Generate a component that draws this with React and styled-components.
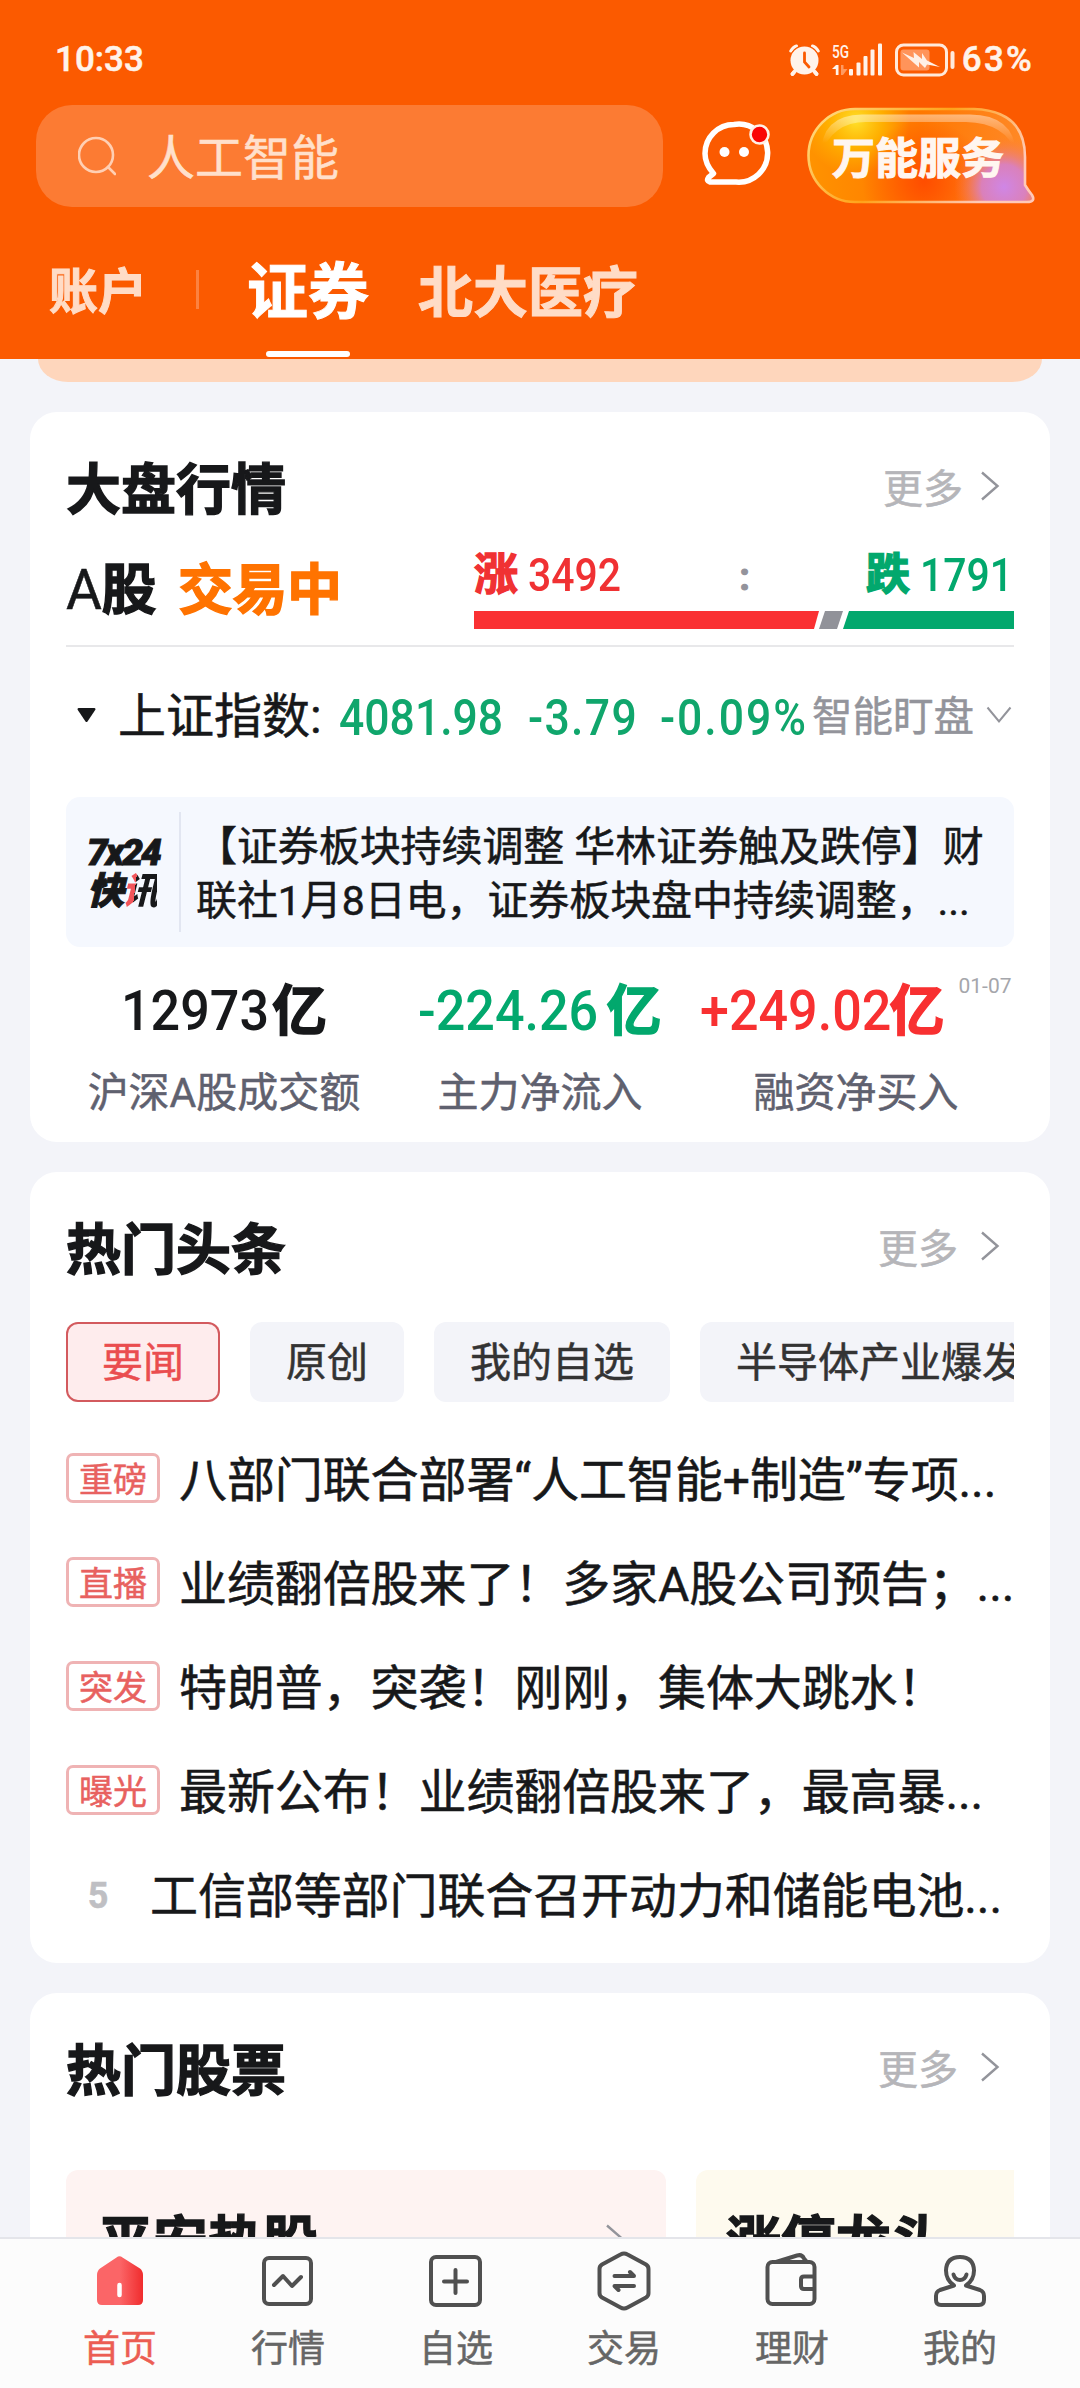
import React from 'react';
import styled, { createGlobalStyle } from 'styled-components';

const chips = ['要闻', '原创', '我的自选', '半导体产业爆发'];

const headlines = [
  { tag: '重磅', title: '八部门联合部署“人工智能+制造”专项...' },
  { tag: '直播', title: '业绩翻倍股来了！多家A股公司预告；...' },
  { tag: '突发', title: '特朗普，突袭！刚刚，集体大跳水！' },
  { tag: '曝光', title: '最新公布！业绩翻倍股来了，最高暴...' },
  { rank: 5, title: '工信部等部门联合召开动力和储能电池...' },
];

const stats = [
  { value: '12973', label: '沪深A股成交额', color: '#17181a', width: 151 },
  { value: '-224.26', label: '主力净流入', color: '#02a86d', width: 188 },
  {
    value: '+249.02',
    label: '融资净买入',
    color: '#f83031',
    width: 189,
    date: '01-07',
  },
];

const navs = [
  { label: '首页', icon: HomeIcon },
  { label: '行情', icon: QuoteIcon },
  { label: '自选', icon: PlusIcon },
  { label: '交易', icon: TradeIcon },
  { label: '理财', icon: WalletIcon },
  { label: '我的', icon: MineIcon },
];

const App = () => {
  return (
    <Screen>
      <GlobalStyle />
      <Header>
        <StatusBar>
          <span>10:33</span>
          <StatusIcons>
            <AlarmIcon />
            <SignalIcon />
            <BatteryIcon />
            <span>63%</span>
          </StatusIcons>
        </StatusBar>
        <SearchRow>
          <SearchBox>
            <svg width="38" height="40" viewBox="0 0 38 40">
              <g fill="none" stroke="#ffcfb3" strokeWidth="2.6">
                <circle cx="18" cy="19" r="17" />
                <path d="M30 31l7 7" strokeLinecap="round" />
              </g>
            </svg>
            <span>人工智能</span>
          </SearchBox>
          <ChatIcon />
          <ServiceButton>
            <ServiceBubble />
            <span>万能服务</span>
          </ServiceButton>
        </SearchRow>
        <Tabs>
          <Tab $size={49}>账户</Tab>
          <TabDivider />
          <Tab $size={61} $active>
            证券
          </Tab>
          <Tab $size={55}>北大医疗</Tab>
        </Tabs>
      </Header>

      <Content>
        <BannerEdge />

        <Card $height={730}>
          <CardHead title="大盘行情" />
          <MarketRow>
            <MarketName>
              A<b>股</b>
              <em>交易中</em>
            </MarketName>
            <UpDown>
              <Counts>
                <Count $color="#f03133">
                  <b>涨</b>
                  <Digits $width={91}>3492</Digits>
                </Count>
                <Colon>:</Colon>
                <Count $color="#02a86d">
                  <b>跌</b>
                  <Digits $width={91}>1791</Digits>
                </Count>
              </Counts>
              <RatioBar>
                <RatioPart $color="#fa3133" $width={345} $clip="0 0, 100% 0, calc(100% - 5px) 100%, 0 100%" />
                <RatioPart $color="#919299" $width={24} $clip="6px 0, 100% 0, calc(100% - 6px) 100%, 0 100%" />
                <RatioPart $color="#02a86d" $width={171} $clip="6px 0, 100% 0, 100% 100%, 0 100%" />
              </RatioBar>
            </UpDown>
          </MarketRow>
          <IndexRow>
            <svg width="19" height="15" viewBox="0 0 19 15">
              <path
                d="M1.5 0h16q1.6.6.7 2L10.5 13.5q-1 1.2-2 0L.8 2Q0 .6 1.5 0z"
                fill="#17181a"
              />
            </svg>
            <IndexName>上证指数:</IndexName>
            <IndexNum $width={189}>4081.98</IndexNum>
            <IndexNum $width={132} $spacing={1.5}>
              -3.79
            </IndexNum>
            <IndexNum $width={150} $spacing={2.2}>
              -0.09%
            </IndexNum>
            <Watch>
              <span>智能盯盘</span>
              <svg width="26" height="18" viewBox="0 0 26 18">
                <path
                  d="M1.5 1.5L13 15.5 24.5 1.5"
                  fill="none"
                  stroke="#93949b"
                  strokeWidth="2"
                />
              </svg>
            </Watch>
          </IndexRow>
          <Flash>
            <FlashLogo>
              <div>7x24</div>
              <div>
                快<i>讯</i>
              </div>
            </FlashLogo>
            <FlashText>
              【证券板块持续调整 华林证券触及跌停】财
              <br />
              联社1月8日电，证券板块盘中持续调整，...
            </FlashText>
          </Flash>
          <Stats>
            {stats.map((s) => (
              <Stat key={s.label}>
                <StatValue $color={s.color}>
                  <Digits $width={s.width} $scale={0.93}>
                    {s.value}
                  </Digits>
                  <b>亿</b>
                  {s.date && <StatDate>{s.date}</StatDate>}
                </StatValue>
                <StatLabel>{s.label}</StatLabel>
              </Stat>
            ))}
          </Stats>
        </Card>

        <Card $height={791}>
          <CardHead title="热门头条" gap={22} />
          <Chips>
            {chips.map((c, i) => (
              <Chip key={c} $active={i === 0}>
                {c}
              </Chip>
            ))}
          </Chips>
          <NewsList>
            {headlines.map((h) => (
              <NewsItem key={h.title}>
                {h.tag ? <Tag>{h.tag}</Tag> : <Rank>{h.rank}</Rank>}
                <span>{h.title}</span>
              </NewsItem>
            ))}
          </NewsList>
        </Card>

        <Card $height={420}>
          <CardHead title="热门股票" gap={22} />
          <StockCards>
            <StockCard $bg="#fef3f2" $pad={32}>
              平安热股
              <Arrow />
            </StockCard>
            <StockCard $bg="#fefaee" $pad={30}>
              涨停龙头
            </StockCard>
          </StockCards>
        </Card>
      </Content>

      <NavBar>
        {navs.map(({ label, icon: Icon }, i) => (
          <NavItem key={label} $active={i === 0}>
            <Icon />
            {label}
          </NavItem>
        ))}
      </NavBar>
    </Screen>
  );
};

export default App;

const CardHead = ({ title, gap = 17 }) => (
  <Head>
    <h2>{title}</h2>
    <More $gap={gap}>
      更多
      <Arrow />
    </More>
  </Head>
);

function Arrow() {
  return (
    <svg width="20" height="30" viewBox="0 0 20 30">
      <path
        d="M2 1.5L17.5 15 2 28.5"
        fill="none"
        stroke="#93949b"
        strokeWidth="2.4"
      />
    </svg>
  );
}

function AlarmIcon() {
  return (
    <svg width="31" height="32" viewBox="0 0 31 32">
      <g fill="none" stroke="#fff3ea" strokeLinecap="round">
        <path d="M1.8 7Q4 3 7.500 2M29.200 7Q27 3 23.500 2" strokeWidth="3" />
        <path d="M6 27l-2.500 3M25 27l2.500 3" strokeWidth="3.600" />
      </g>
      <circle cx="15.500" cy="16.500" r="15.200" fill="#fb5a00" />
      <path d="M6 27l-2.500 3M25 27l2.500 3" stroke="#fff3ea" strokeWidth="3.600" strokeLinecap="round" />
      <circle cx="15.500" cy="16.500" r="14" fill="#fff3ea" />
      <path
        d="M15.500 9v9l4.500 5"
        fill="none"
        stroke="#fb5a00"
        strokeWidth="2.800"
        strokeLinecap="round"
      />
    </svg>
  );
}

function SignalIcon() {
  return (
    <svg width="51" height="33" viewBox="0 0 51 33" overflow="visible">
      <text
        x="0"
        y="14.500"
        fontSize="19"
        fontWeight="500"
        fill="#fff3ea"
        textLength="17"
        lengthAdjust="spacingAndGlyphs"
      >
        5G
      </text>
      <path d="M0 26l4-4h2.500v10H3.800v-6z" fill="#fff3ea" />
      <path d="M9 22h2.500v4h4L11 32H9z" fill="#ff9a61" />
      <g fill="#fff3ea">
        <rect x="17" y="26" width="4" height="6.500" rx="1" />
        <rect x="24.500" y="19.500" width="4" height="13" rx="1" />
        <rect x="31.500" y="13" width="4" height="19.500" rx="1" />
        <rect x="38.500" y="6.500" width="4" height="26" rx="1" />
        <rect x="46" y="0.500" width="4" height="32" rx="1" />
      </g>
    </svg>
  );
}

function BatteryIcon() {
  return (
    <svg width="60" height="34" viewBox="0 0 60 34">
      <rect
        x="1.500"
        y="2"
        width="50"
        height="30"
        rx="7"
        fill="none"
        stroke="#ffe9db"
        strokeWidth="3"
      />
      <rect x="5.500" y="6.500" width="29" height="21" rx="3" fill="#ff945a" />
      <path
        d="M7 9.500l12 5.500-.5-6 8.500 7v-6l5 7.500 13 6.500-13-2.500-2 3.500-6-6v5.500z"
        fill="#fff0e6"
      />
      <path d="M57.500 10v14" stroke="#ffe9db" strokeWidth="4" strokeLinecap="round" />
    </svg>
  );
}

function ChatIcon() {
  return (
    <svg width="70" height="66" viewBox="0 0 70 66">
      <path
        d="M32 4.500a29 29 0 1 1 2 57.500H8q-4-1-1.500-4.500l5-4Q3 44 3 33.500A29 29 0 0 1 32 4.500z"
        fill="none"
        stroke="#fff"
        strokeWidth="5.500"
        strokeLinejoin="round"
      />
      <circle cx="22.500" cy="32" r="5" fill="#fff" />
      <circle cx="42" cy="32" r="5" fill="#fff" />
      <circle cx="57.500" cy="14.500" r="9" fill="#fa0505" stroke="#fff0e6" strokeWidth="2.600" />
    </svg>
  );
}

function ServiceBubble() {
  const bubble =
    'M49 2H168Q219 4 219 50V78Q222 83 226 88Q230 95 221 95H49A46.500 46.500 0 0 1 49 2z';
  return (
    <svg width="230" height="98" viewBox="0 0 230 98">
      <defs>
        <linearGradient id="base" x1="0" y1="0" x2="1" y2="0">
          <stop offset="0" stopColor="#ff9300" />
          <stop offset="0.500" stopColor="#ff7800" />
          <stop offset="1" stopColor="#ff8a2a" />
        </linearGradient>
        <radialGradient id="sun" gradientUnits="userSpaceOnUse" cx="50" cy="14" r="54">
          <stop offset="0" stopColor="#ffe02a" />
          <stop offset="0.500" stopColor="#ffba00" stopOpacity="0.800" />
          <stop offset="1" stopColor="#ffb400" stopOpacity="0" />
        </radialGradient>
        <radialGradient id="red" gradientUnits="userSpaceOnUse" cx="118" cy="74" r="62">
          <stop offset="0" stopColor="#ff4d00" />
          <stop offset="1" stopColor="#ff4d00" stopOpacity="0" />
        </radialGradient>
        <radialGradient id="violet" gradientUnits="userSpaceOnUse" cx="198" cy="80" r="50">
          <stop offset="0" stopColor="#cf86e6" />
          <stop offset="0.450" stopColor="#d680cc" stopOpacity="0.900" />
          <stop offset="1" stopColor="#ff7a4a" stopOpacity="0" />
        </radialGradient>
        <linearGradient id="edge" x1="0" y1="0" x2="1" y2="0.400">
          <stop offset="0" stopColor="#ffe08a" />
          <stop offset="0.550" stopColor="#ffa31a" />
          <stop offset="1" stopColor="#ffc9b8" />
        </linearGradient>
        <linearGradient id="gloss" x1="0" y1="0" x2="0" y2="1">
          <stop offset="0" stopColor="#fff" stopOpacity="0.450" />
          <stop offset="0.700" stopColor="#fff" stopOpacity="0" />
        </linearGradient>
      </defs>
      <path d={bubble} fill="url(#base)" />
      <path d={bubble} fill="url(#sun)" />
      <path d={bubble} fill="url(#red)" />
      <path d={bubble} fill="url(#violet)" />
      <path
        d="M15 48Q15 8 56 7.500H164Q208 8 210 46Q200 16 160 15H60Q26 15 15 48z"
        fill="url(#gloss)"
      />
      <path d={bubble} fill="none" stroke="url(#edge)" strokeWidth="2.600" />
    </svg>
  );
}

function HomeIcon() {
  return (
    <svg width="60" height="60" viewBox="0 0 60 60">
      <defs>
        <linearGradient id="home" x1="0" x2="1">
          <stop offset="0.500" stopColor="#fb6567" />
          <stop offset="1" stopColor="#f02c2d" />
        </linearGradient>
      </defs>
      <path
        d="M26.500 6.500Q29.500 4 32.500 6.500L50 17.500Q53 20 53 24V49Q53 54 48 54H12Q7 54 7 49V24Q7 20 10 17.500z"
        fill="url(#home)"
      />
      <path d="M29.500 34v10" stroke="#fff" strokeWidth="4.500" strokeLinecap="round" />
    </svg>
  );
}

function QuoteIcon() {
  return (
    <LineIcon>
      <rect x="6" y="7" width="47" height="46" rx="5" />
      <path d="M16 34l9-9 9 10 9-9" />
    </LineIcon>
  );
}

function PlusIcon() {
  return (
    <LineIcon>
      <rect x="5" y="6" width="49" height="48" rx="5" />
      <path d="M29.500 19v23M18 30.500h23" />
    </LineIcon>
  );
}

function TradeIcon() {
  return (
    <LineIcon>
      <path d="M26.500 3.500Q30 1.500 33.500 3.500L52 13.500Q54.500 15 54.500 18V42Q54.500 45 52 46.500L33.500 56.500Q30 58.500 26.500 56.500L8 46.500Q5.500 45 5.500 42V18Q5.500 15 8 13.500z" />
      <path d="M20.500 25H40l-4-4M40 35H20.500l4 4" />
    </LineIcon>
  );
}

function WalletIcon() {
  return (
    <LineIcon>
      <rect x="5.500" y="11" width="47" height="42" rx="5" />
      <path d="M52 25.500H42q-3 0-3 3V35q0 3 3 3h10M14 11L35 4.500q5-1.500 7 3l2.500 3" />
    </LineIcon>
  );
}

function MineIcon() {
  return (
    <LineIcon>
      <path d="M24 34.500Q16 29 16 19.500Q16.500 6 30 6T44 19.500Q44 29 36 34.500L50 39Q54 40.500 54 45V49Q54 54 49 54H11Q6 54 6 49V45Q6 40.500 10 39z" />
      <path d="M23.500 23.500Q25 29 30 29t6.500-5.500" />
    </LineIcon>
  );
}

const GlobalStyle = createGlobalStyle`
  * {
    box-sizing: border-box;
    margin: 0;
    padding: 0;
  }
  body {
    background: #f3f4f9;
    font-family: Roboto, 'Noto Sans CJK SC', sans-serif;
    color: #17181a;
    -webkit-text-stroke: 0.5px;
  }
  b,
  em,
  h2 {
    font-weight: 700;
    -webkit-text-stroke: 1.4px;
  }
  svg {
    display: block;
    flex-shrink: 0;
  }
`;

const Screen = styled.div`
  display: flex;
  flex-direction: column;
  width: 1080px;
  height: 2388px;
  overflow: hidden;
`;

const Header = styled.header`
  flex-shrink: 0;
  height: 359px;
  background: #fb5a00;
  color: #fff;
`;

const StatusBar = styled.div`
  display: flex;
  justify-content: space-between;
  align-items: center;
  height: 105px;
  padding: 14px 46px 0 55px;
  font-size: 35px;
  font-weight: 500;
  line-height: 40px;
  color: #fff3ea;
`;

const StatusIcons = styled.div`
  display: flex;
  align-items: center;
  gap: 12px;
  span {
    margin-left: -5px;
    letter-spacing: 2.2px;
  }
`;

const SearchRow = styled.div`
  display: flex;
  height: 102px;
  padding-left: 36px;
  > svg {
    margin: 15px 0 0 39px;
  }
`;

const SearchBox = styled.div`
  display: flex;
  align-items: center;
  width: 627px;
  height: 102px;
  padding-left: 42px;
  border-radius: 36px;
  background: #fc7b33;
  font-size: 48px;
  line-height: 60px;
  color: #ffe0cc;
  svg {
    margin-right: 31px;
  }
  span {
    padding-top: 5px;
  }
`;

const ServiceButton = styled.div`
  display: grid;
  margin: 2px 0 0 34px;
  > * {
    grid-area: 1 / 1;
  }
  span {
    position: relative;
    padding-left: 26px;
    font-size: 43px;
    font-weight: 700;
    line-height: 104px;
    color: #fff6f0;
    -webkit-text-stroke: 1px;
  }
`;

const Tabs = styled.nav`
  display: flex;
  align-items: center;
  height: 152px;
  padding: 0 49px;
`;

const Tab = styled.div`
  display: flex;
  flex-direction: column;
  align-items: center;
  height: 152px;
  margin-right: 49px;
  padding-top: 46px;
  font-size: ${({ $size }) => $size}px;
  font-weight: 700;
  line-height: 80px;
  color: ${({ $active }) => ($active ? '#fff' : '#ffdcc6')};
  -webkit-text-stroke: 1px;
  &::after {
    content: '';
    display: ${({ $active }) => ($active ? 'block' : 'none')};
    width: 84px;
    height: 6px;
    margin-top: 18px;
    border-radius: 3px;
    background: #fff;
  }
`;

const TabDivider = styled.i`
  width: 3px;
  height: 39px;
  margin: 12px 48px 0 0;
  background: #fc8240;
`;

const Content = styled.main`
  flex: 1;
  min-height: 0;
  overflow: hidden;
  padding: 0 30px;
`;

const BannerEdge = styled.div`
  height: 23px;
  margin: 0 8px;
  border-radius: 0 0 30px 30px / 0 0 23px 23px;
  background: #fed6bc;
`;

const Card = styled.section`
  height: ${({ $height }) => $height}px;
  margin-top: 30px;
  padding: 0 36px;
  border-radius: 27px;
  background: #fff;
  overflow: hidden;
`;

const Head = styled.div`
  display: flex;
  justify-content: space-between;
  align-items: center;
  height: 80px;
  margin-top: 36px;
  h2 {
    padding-top: 4px;
    font-size: 55px;
    line-height: 80px;
  }
`;

const More = styled.div`
  display: flex;
  align-items: center;
  gap: ${({ $gap }) => $gap}px;
  padding: 0 14px 4px 0;
  font-size: 40px;
  color: #b5b5b9;
`;

const MarketRow = styled.div`
  display: flex;
  justify-content: space-between;
  height: 119px;
  border-bottom: 2px solid #e8e8ea;
`;

const MarketName = styled.div`
  padding-top: 22px;
  font-size: 55px;
  line-height: 80px;
  letter-spacing: -0.5px;
  em {
    margin-left: 22px;
    font-style: normal;
    color: #ff7300;
  }
`;

const UpDown = styled.div`
  width: 540px;
  padding-top: 17px;
`;

const Counts = styled.div`
  display: flex;
  justify-content: space-between;
  height: 66px;
  padding-right: 3px;
`;

// Roboto squeezed to the width of the DIN-style figures
const Digits = styled.span`
  width: ${({ $width }) => $width}px;
  font-weight: 500;
  white-space: nowrap;
  transform: scaleX(${({ $scale = 0.89 }) => $scale});
  transform-origin: left;
  -webkit-text-stroke: 0;
`;

const Count = styled.div`
  display: flex;
  gap: 10px;
  font-size: 46px;
  line-height: 60px;
  color: ${({ $color }) => $color};
  b {
    font-size: 44px;
  }
`;

const Colon = styled.div`
  padding-left: 4px;
  font-size: 38px;
  font-weight: 700;
  line-height: 64px;
  color: #93939b;
  -webkit-text-stroke: 1px;
`;

const RatioBar = styled.div`
  display: flex;
  height: 18px;
`;

const RatioPart = styled.i`
  width: ${({ $width }) => $width}px;
  background: ${({ $color }) => $color};
  clip-path: polygon(${({ $clip }) => $clip});
`;

const IndexRow = styled.div`
  display: flex;
  align-items: center;
  height: 150px;
  padding: 0 2px 14px 11px;
`;

const IndexName = styled.div`
  width: 221px;
  margin-left: 22px;
  padding-bottom: 6px;
  font-size: 48px;
  white-space: nowrap;
`;

const IndexNum = styled(Digits)`
  flex-shrink: 0;
  padding-top: 5px;
  font-size: 50px;
  letter-spacing: ${({ $spacing = 0 }) => $spacing}px;
  color: #10a66c;
`;

const Watch = styled.div`
  display: flex;
  align-items: center;
  gap: 12px;
  margin-left: auto;
  font-size: 40.5px;
  white-space: nowrap;
  color: #93949b;
  span {
    padding-bottom: 4px;
  }
`;

const Flash = styled.div`
  display: flex;
  align-items: center;
  height: 150px;
  border-radius: 14px;
  background: #f5f8fe;
`;

const FlashLogo = styled.div`
  width: 115px;
  height: 120px;
  padding: 21px 0 0 21px;
  border-right: 2px solid #e2e6f1;
  font-size: 37px;
  font-weight: 900;
  font-style: italic;
  line-height: 39px;
  letter-spacing: -2px;
  white-space: nowrap;
  -webkit-text-stroke: 1px;
  i {
    background: linear-gradient(97deg, #f2555a 38%, #17181a 38%);
    background-clip: text;
    color: transparent;
    -webkit-text-stroke: 0;
  }
`;

const FlashText = styled.p`
  padding: 4px 0 0 15px;
  font-size: 41px;
  line-height: 54px;
  letter-spacing: -0.08px;
  white-space: nowrap;
`;

const Stats = styled.div`
  display: grid;
  grid-template-columns: repeat(3, 1fr);
`;

const Stat = styled.div`
  display: flex;
  flex-direction: column;
  align-items: center;
  padding-top: 24px;
`;

const StatValue = styled.div`
  display: flex;
  font-size: 56px;
  line-height: 80px;
  color: ${({ $color }) => $color};
  b {
    font-size: 55px;
  }
`;

const StatDate = styled.sup`
  margin-left: 14px;
  font-size: 21px;
  line-height: 30px;
  color: #a5a6ab;
  -webkit-text-stroke: 0;
`;

const StatLabel = styled.div`
  margin-top: 12px;
  font-size: 41px;
  line-height: 60px;
  color: #5f616f;
`;

const Chips = styled.div`
  display: flex;
  gap: 30px;
  margin-top: 34px;
  overflow: hidden;
`;

const Chip = styled.div`
  flex-shrink: 0;
  height: 80px;
  padding: 0 36px;
  border-radius: 12px;
  background: ${({ $active }) => ($active ? '#feeced' : '#f3f4f9')};
  box-shadow: ${({ $active }) => ($active ? 'inset 0 0 0 2px #d35a5e' : 'none')};
  font-size: 41px;
  line-height: 83px;
  color: ${({ $active }) => ($active ? '#ea4d4f' : '#333')};
`;

const NewsList = styled.ul`
  padding-top: 24px;
`;

const NewsItem = styled.li`
  display: flex;
  align-items: center;
  height: 104px;
  font-size: 48px;
  letter-spacing: -0.1px;
  white-space: nowrap;
  span {
    padding-bottom: 4px;
  }
`;

const Tag = styled.div`
  flex-shrink: 0;
  width: 94px;
  height: 50px;
  margin-right: 19px;
  border: 3px solid #efb3b4;
  border-radius: 7px;
  font-size: 34px;
  line-height: 48px;
  text-align: center;
  color: #e8615f;
`;

const Rank = styled.div`
  flex-shrink: 0;
  width: 64px;
  margin-right: 20px;
  padding-top: 4px;
  font-size: 36px;
  font-weight: 700;
  text-align: center;
  color: #bfbfc3;
`;

const StockCards = styled.div`
  display: flex;
  gap: 30px;
  margin-top: 61px;
  overflow: hidden;
`;

const StockCard = styled.div`
  display: flex;
  flex-shrink: 0;
  justify-content: space-between;
  width: 600px;
  height: 300px;
  padding: 32px 41px 0 ${({ $pad }) => $pad}px;
  border-radius: 12px;
  background: ${({ $bg }) => $bg};
  font-size: 55px;
  font-weight: 700;
  line-height: 80px;
  -webkit-text-stroke: 1.4px;
  svg {
    margin-top: 22px;
  }
`;

const NavBar = styled.footer`
  display: flex;
  flex-shrink: 0;
  height: 151px;
  padding: 0 36px;
  border-top: 2px solid #e4e5ea;
  background: #fcfcfc;
`;

const NavItem = styled.div`
  display: flex;
  flex: 1;
  flex-direction: column;
  align-items: center;
  gap: 14px;
  padding-top: 12px;
  font-size: 37px;
  line-height: 50px;
  color: ${({ $active }) => ($active ? '#ec5d53' : '#666')};
`;

const LineIcon = styled.svg.attrs({ viewBox: '0 0 60 60' })`
  width: 60px;
  height: 60px;
  fill: none;
  stroke: #505050;
  stroke-width: 4;
  stroke-linecap: round;
  stroke-linejoin: round;
`;
